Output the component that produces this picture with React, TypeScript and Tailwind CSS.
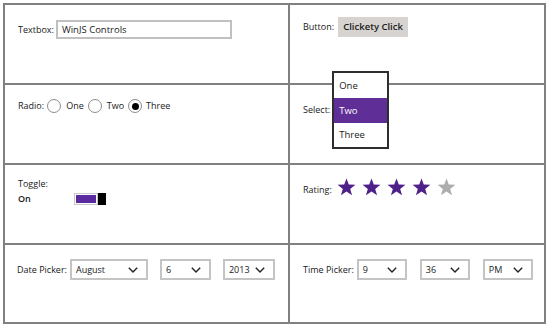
import React from "react";

function Chevron() {
  return (
    <svg width="10" height="6" viewBox="0 0 10 6" className="shrink-0">
      <path d="M0.8 0.8 L5 5 L9.2 0.8" fill="none" stroke="#222" strokeWidth="1.4" />
    </svg>
  );
}

function Drop({ value, w }: { value: string; w: string }) {
  return (
    <div className={`${w} h-[21px] border-2 border-[#c4c4c4] flex items-center justify-between pl-[4px] pr-[8px] bg-white`}>
      <span>{value}</span>
      <Chevron />
    </div>
  );
}

function Star({ color }: { color: string }) {
  return (
    <svg width="19" height="18" viewBox="0 0 24 23" className="shrink-0">
      <polygon
        points="12,0.5 14.9,8.4 23.4,8.7 16.7,13.9 19.1,22.1 12,17.3 4.9,22.1 7.3,13.9 0.6,8.7 9.1,8.4"
        fill={color}
      />
    </svg>
  );
}

function Radio({ checked }: { checked?: boolean }) {
  return (
    <div className="w-[14px] h-[14px] rounded-full border-[1.5px] border-[#8c8c8c] flex items-center justify-center bg-white shrink-0">
      {checked && <div className="w-[7px] h-[7px] rounded-full bg-black" />}
    </div>
  );
}

export default function App() {
  return (
    <div className="w-[550px] h-[328px] bg-white pt-[3px] pl-[3px] font-['Open_Sans',sans-serif] text-[9px] leading-[12px] text-[#1a1a1a] overflow-hidden">
      <div className="grid grid-cols-[283px_254px] grid-rows-[78px_78px_78px_77px] gap-[2px] bg-[#808080] p-[2px] w-[543px]">
        {/* Textbox */}
        <div className="bg-white pl-[13px] pt-[15px]">
          <div className="flex items-center gap-[2px]">
            <span>Textbox:</span>
            <div className="w-[176px] h-[19px] border-2 border-[#c0c0c0] flex items-center pl-[4px] text-[9.5px]">
              WinJS Controls
            </div>
          </div>
        </div>
        {/* Button */}
        <div className="bg-white pl-[13px] pt-[12px]">
          <div className="flex items-center gap-[4px]">
            <span>Button:</span>
            <div className="w-[70px] h-[20px] bg-[#d6d3d0] flex items-center justify-center font-semibold text-[9.5px]">
              Clickety Click
            </div>
          </div>
        </div>
        {/* Radio */}
        <div className="bg-white pl-[13px] pt-[14px]">
          <div className="flex items-center">
            <span>Radio:</span>
            <div className="ml-[3px]"><Radio /></div>
            <span className="ml-[5px]">One</span>
            <div className="ml-[4px]"><Radio /></div>
            <span className="ml-[5px]">Two</span>
            <div className="ml-[4px]"><Radio checked /></div>
            <span className="ml-[4px]">Three</span>
          </div>
        </div>
        {/* Select */}
        <div className="bg-white pl-[13px] relative z-10">
          <div className="flex items-center -mt-[14px]">
            <span>Select:</span>
            <div className="ml-[2px] w-[57px] h-[78px] border-2 border-[#2e2e2e] bg-white flex flex-col text-[9.5px]">
              <div className="h-[25px] flex items-center pl-[5px]">One</div>
              <div className="h-[25px] flex items-center pl-[5px] bg-[#5f2e96] text-white">Two</div>
              <div className="h-[24px] flex items-center pl-[5px]">Three</div>
            </div>
          </div>
        </div>
        {/* Toggle */}
        <div className="bg-white pl-[13px] pt-[13px]">
          <div>Toggle:</div>
          <div className="flex items-center mt-[3px]">
            <span className="w-[56px] font-semibold">On</span>
            <div className="w-[32px] h-[12px] flex items-stretch">
              <div className="flex-1 border border-[#c8c8c8] p-[1px] bg-white">
                <div className="w-full h-full bg-[#5a2aa0]" />
              </div>
              <div className="w-[8px] bg-black" />
            </div>
          </div>
        </div>
        {/* Rating */}
        <div className="bg-white pl-[13px] pt-[12px]">
          <div className="flex items-center">
            <span className="mt-[7px]">Rating:</span>
            <div className="flex items-center gap-[6px] ml-[5px]">
              <Star color="#4e2189" />
              <Star color="#4e2189" />
              <Star color="#4e2189" />
              <Star color="#4e2189" />
              <Star color="#adadad" />
            </div>
          </div>
        </div>
        {/* Date picker */}
        <div className="bg-white pl-[12px] pt-[14px]">
          <div className="flex items-center">
            <span>Date Picker:</span>
            <div className="ml-[3px]"><Drop value="August" w="w-[78px]" /></div>
            <div className="ml-[12px]"><Drop value="6" w="w-[51px]" /></div>
            <div className="ml-[12px]"><Drop value="2013" w="w-[52px]" /></div>
          </div>
        </div>
        {/* Time picker */}
        <div className="bg-white pl-[13px] pt-[14px]">
          <div className="flex items-center">
            <span>Time Picker:</span>
            <div className="ml-[3px]"><Drop value="9" w="w-[50px]" /></div>
            <div className="ml-[13px]"><Drop value="36" w="w-[50px]" /></div>
            <div className="ml-[13px]"><Drop value="PM" w="w-[50px]" /></div>
          </div>
        </div>
      </div>
    </div>
  );
}
